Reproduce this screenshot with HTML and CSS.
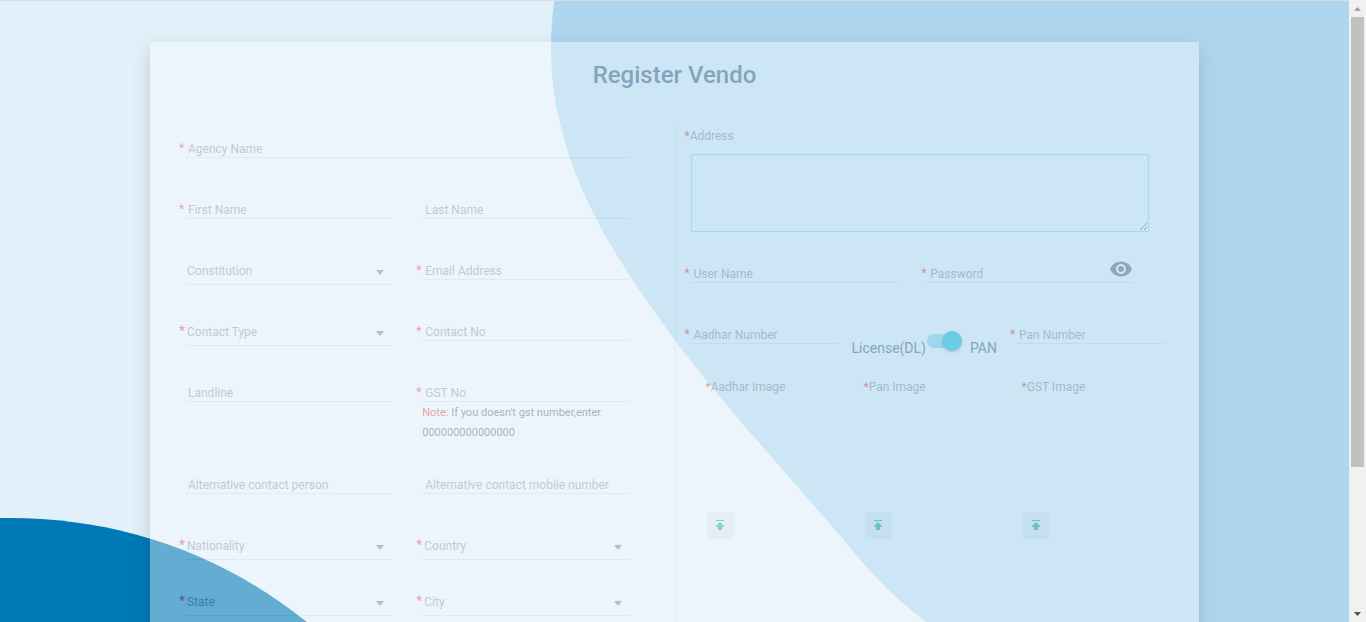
FILE: index.html
```html
<!DOCTYPE html>
<html lang="en">
<head>
<meta charset="utf-8">
<title>Register Vendor</title>
<link rel="stylesheet" href="styles.css">
</head>
<body>
<div class="viewport">
  <main class="page">
    <svg class="backdrop" viewBox="0 0 1349 622" preserveAspectRatio="xMidYMin slice" aria-hidden="true">
      <path fill="#aed7ef" d="M554 0C549 40 550 80 559 118C576 195 615 257 674 338C690 360 715 390 747 428L843 538C870 572 897 600 928 622H1349V0Z"/>
      <path fill="#0079b7" d="M0 517C110 515 217 548 308 622H0Z"/>
    </svg>
    <form class="card">
      <h1 class="title">Register Vendo</h1>
      <div class="columns">
        <section class="details">
          <div class="row single"><label class="field"><span class="star">*</span><input class="input" placeholder="Agency Name" aria-label="Agency Name"></label></div>
          <div class="row">
            <label class="field"><span class="star">*</span><input class="input" placeholder="First Name" aria-label="First Name"></label>
            <label class="field"><span class="star"></span><input class="input" placeholder="Last Name" aria-label="Last Name"></label>
          </div>
          <div class="row">
            <label class="field"><span class="star"></span><select class="select" aria-label="Constitution"><option>Constitution</option></select><svg class="caret" viewBox="0 0 8 5"><path d="M0 0h8L4 5z"/></svg></label>
            <label class="field"><span class="star">*</span><input class="input" type="email" placeholder="Email Address" aria-label="Email Address"></label>
          </div>
          <div class="row">
            <label class="field"><span class="star large">*</span><select class="select" aria-label="Contact Type"><option>Contact Type</option></select><svg class="caret" viewBox="0 0 8 5"><path d="M0 0h8L4 5z"/></svg></label>
            <label class="field"><span class="star">*</span><input class="input" placeholder="Contact No" aria-label="Contact No"></label>
          </div>
          <div class="row">
            <label class="field"><span class="star"></span><input class="input" placeholder="Landline" aria-label="Landline"></label>
            <div>
              <label class="field"><span class="star">*</span><input class="input" placeholder="GST No" aria-label="GST No"></label>
              <p class="note"><span class="warn">Note:</span> If you doesn't gst number,enter 000000000000000</p>
            </div>
          </div>
          <div class="row">
            <label class="field"><span class="star"></span><input class="input" placeholder="Alternative contact person" aria-label="Alternative contact person"></label>
            <label class="field"><span class="star"></span><input class="input" placeholder="Alternative contact mobile number" aria-label="Alternative contact mobile number"></label>
          </div>
          <div class="row compact">
            <label class="field"><span class="star large">*</span><select class="select" aria-label="Nationality"><option>Nationality</option></select><svg class="caret" viewBox="0 0 8 5"><path d="M0 0h8L4 5z"/></svg></label>
            <label class="field"><span class="star large">*</span><select class="select" aria-label="Country"><option>Country</option></select><svg class="caret" viewBox="0 0 8 5"><path d="M0 0h8L4 5z"/></svg></label>
          </div>
          <div class="row compact">
            <label class="field"><span class="star large">*</span><select class="select" aria-label="State"><option>State</option></select><svg class="caret" viewBox="0 0 8 5"><path d="M0 0h8L4 5z"/></svg></label>
            <label class="field"><span class="star large">*</span><select class="select" aria-label="City"><option>City</option></select><svg class="caret" viewBox="0 0 8 5"><path d="M0 0h8L4 5z"/></svg></label>
          </div>
        </section>
        <section class="account">
          <label class="caption" for="address"><span class="warn">*</span>Address</label>
          <textarea class="address" id="address"></textarea>
          <div class="row login">
            <label class="field"><span class="star">*</span><input class="input" placeholder="User Name" aria-label="User Name"></label>
            <div class="password">
              <label class="field"><span class="star">*</span><input class="input" type="password" placeholder="Password" aria-label="Password"></label>
              <button class="eye" type="button" aria-label="Show password"><svg viewBox="1 4 22 16"><path d="M12 4.5C7 4.5 2.730 7.610 1 12c1.730 4.390 6 7.500 11 7.500s9.270-3.110 11-7.500c-1.730-4.390-6-7.500-11-7.500zM12 17c-2.760 0-5-2.240-5-5s2.240-5 5-5 5 2.240 5 5-2.240 5-5 5zm0-8c-1.660 0-3 1.340-3 3s1.340 3 3 3 3-1.340 3-3-1.340-3-3-3z"/></svg></button>
            </div>
          </div>
          <div class="row identity">
            <label class="field"><span class="star">*</span><input class="input" placeholder="Aadhar Number" aria-label="Aadhar Number"></label>
            <label class="toggle"><span>License(DL)</span><input class="switch" type="checkbox" role="switch" checked><span>PAN</span></label>
            <label class="field"><span class="star">*</span><input class="input" placeholder="Pan Number" aria-label="Pan Number"></label>
          </div>
          <div class="uploads">
            <div class="upload"><span class="caption"><span class="warn">*</span>Aadhar Image</span><button class="send" type="button" aria-label="Upload Aadhar Image"><svg viewBox="0 0 10 11"><path d="M1 0h8v1H1zM5 2l4 4v1H7v3H3V7H1V6z"/></svg></button></div>
            <div class="upload"><span class="caption"><span class="warn">*</span>Pan Image</span><button class="send" type="button" aria-label="Upload Pan Image"><svg viewBox="0 0 10 11"><path d="M1 0h8v1H1zM5 2l4 4v1H7v3H3V7H1V6z"/></svg></button></div>
            <div class="upload"><span class="caption"><span class="warn">*</span>GST Image</span><button class="send" type="button" aria-label="Upload GST Image"><svg viewBox="0 0 10 11"><path d="M1 0h8v1H1zM5 2l4 4v1H7v3H3V7H1V6z"/></svg></button></div>
          </div>
        </section>
      </div>
    </form>
  </main>
  <div class="scrollbar" aria-hidden="true">
    <svg class="arrow up" viewBox="0 0 7 4"><path d="M0 4h7L3.500 0z"/></svg>
    <div class="track"><div class="thumb"></div></div>
    <svg class="arrow" viewBox="0 0 7 4"><path d="M0 0h7L3.500 4z"/></svg>
  </div>
</div>
</body>
</html>
```
FILE: styles.css
```css
* { box-sizing: border-box; }
body {
  margin: 0;
  font-family: Roboto, "Liberation Sans", sans-serif;
  font-size: 12px;
  color: #45526e;
}
.viewport {
  display: grid;
  grid-template-columns: minmax(0, 1fr) 17px;
  height: 100vh;
  overflow: hidden;
}
.page {
  position: relative;
  overflow: hidden;
  padding: 41px 150px 0;
  background: #e1f0f9;
  border-top: 1px solid #d9dde1;
}
.backdrop {
  position: absolute;
  inset: 0;
  width: 100%;
  height: 100%;
}
.card {
  position: relative;
  min-height: 100vh;
  padding-top: 18px;
  background: #fff;
  border-radius: 2px;
  opacity: .39;
  box-shadow: 0 8px 17px rgba(0, 0, 0, .2), 0 6px 20px rgba(0, 0, 0, .19);
}
.title {
  margin: 0 0 36px;
  font-size: 24px;
  font-weight: 500;
  line-height: 30px;
  text-align: center;
}
.columns {
  display: grid;
  grid-template-columns: repeat(2, minmax(0, 1fr));
}
.details { padding: 12px 45px 0 29px; }
.account {
  min-height: 540px;
  padding: 0 35px 0 9px;
  border-left: 1px solid #e0e3e6;
}
.row {
  display: grid;
  grid-template-columns: 1fr 1fr;
  column-gap: 24px;
  align-items: start;
  min-height: 61px;
}
.row.single { grid-template-columns: 1fr; }
.row.compact { min-height: 56px; }
.field {
  display: grid;
  grid-template-columns: 6px minmax(0, 1fr);
  align-items: start;
}
.star {
  font-size: 12px;
  line-height: 20px;
  color: #f22;
}
.star.large { font-size: 14px; }
.input, .select {
  grid-area: 1 / 2;
  width: 100%;
  margin: 0;
  border: 0;
  border-bottom: 1px solid #dee2e6;
  border-radius: 0;
  background: none;
  font: inherit;
  line-height: 16px;
  outline: 0;
}
.input {
  height: 20px;
  padding: 3px 3px 0;
}
.input::placeholder { color: #8e8e93; opacity: 1; }
.select {
  height: 25px;
  padding: 0 2px 2px;
  color: #8e8e93;
  appearance: none;
}
.caret {
  grid-area: 1 / 2;
  place-self: center end;
  width: 8px;
  height: 5px;
  margin-right: 8px;
  fill: #757575;
  pointer-events: none;
}
.note {
  margin: 0;
  padding: 1px 0 31px 6px;
  font-size: 11px;
  line-height: 20px;
}
.warn { color: #f22; }
.caption {
  display: block;
  line-height: 20px;
  color: #8e8e93;
}
.address {
  display: block;
  width: calc(100% - 21px);
  height: 78px;
  margin: 8px 0 31px 6px;
  border: 1px solid #a4d8e2;
  border-radius: 1px;
  background: none;
  font: inherit;
  outline: 0;
}
.login { padding-right: 30px; }
.password { position: relative; }
.eye {
  position: absolute;
  top: -2px;
  right: 2px;
  width: 22px;
  height: 16px;
  padding: 0;
  border: 0;
  background: none;
}
.eye svg { display: block; fill: #616161; }
.row.identity {
  grid-template-columns: 1fr auto 1fr;
  column-gap: 13px;
  min-height: 53px;
}
.toggle {
  display: flex;
  align-items: start;
  font-size: 14px;
  line-height: 20px;
  padding-top: 7px;
}
.toggle span { padding-top: 7px; }
.switch {
  appearance: none;
  display: flex;
  align-items: center;
  width: 35px;
  height: 14px;
  margin: 3px 8px 0 1px;
  border-radius: 7px;
  background: #84d8eb;
}
.switch::before {
  content: "";
  width: 20px;
  height: 20px;
  margin-left: 15px;
  flex: none;
  border-radius: 50%;
  background: #09bcd4;
  box-shadow: 0 1px 3px rgba(0, 0, 0, .4);
}
.uploads {
  display: grid;
  grid-template-columns: repeat(3, 158px);
  padding-left: 21px;
}
.send {
  display: grid;
  place-items: center;
  width: 27px;
  height: 27px;
  margin: 115px 0 0 1px;
  padding: 0;
  border: 0;
  border-radius: 4px;
  background: #ececf0;
}
.send svg { width: 10px; height: 11px; fill: #009f8f; }
.scrollbar {
  display: grid;
  grid-template-rows: 17px 1fr 17px;
  justify-items: center;
  align-items: center;
  background: #f1f1f1;
}
.track { width: 13px; height: 100%; }
.thumb { height: 76.5%; background: #c1c1c1; }
.arrow { width: 7px; height: 4px; fill: #505050; }
.arrow.up { fill: #a3a3a3; }
```
